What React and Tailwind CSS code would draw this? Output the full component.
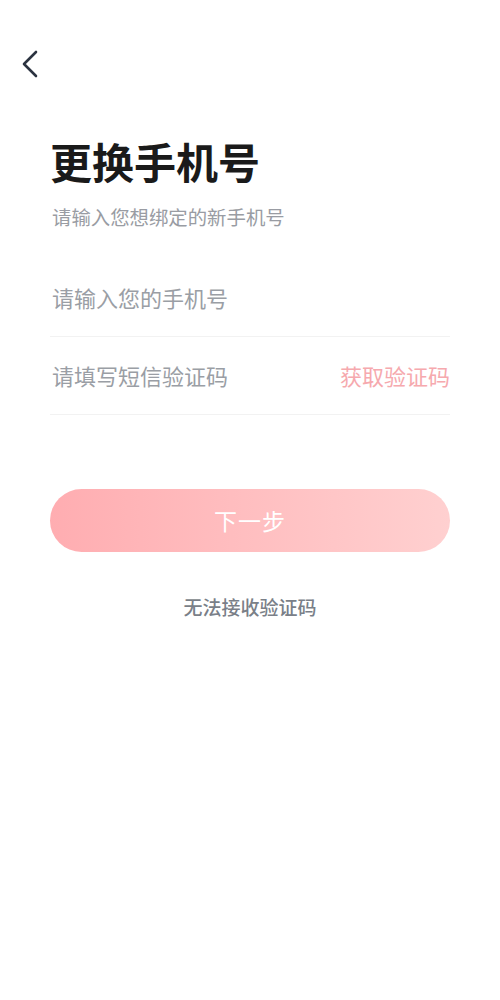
import React from "react";

const font = { fontFamily: '"Noto Sans CJK SC", "Noto Sans", sans-serif' };

const BackIcon = () => (
  <svg width="30" height="32" viewBox="0 0 30 32" fill="none">
    <polyline
      points="20,4 8,16 20,28"
      stroke="#2b3340"
      strokeWidth="2.6"
      strokeLinecap="round"
      strokeLinejoin="round"
    />
  </svg>
);

const App = () => {
  return (
    <div className="min-h-[1000px] w-full bg-white" style={font}>
      <div className="pt-[48px] pl-[16px]">
        <button className="block focus:outline-none">
          <BackIcon />
        </button>
      </div>

      <div className="px-[50px]">
        <h1 className="mt-[60px] text-[42px] leading-[42px] font-bold text-[#1a1a1a]">
          更换手机号
        </h1>
        <p className="mt-[25px] text-[19.4px] leading-[19px] text-[#999ca3] pl-[2px]">
          请输入您想绑定的新手机号
        </p>

        <div className="mt-[32px]">
          <div className="flex items-center h-[79px] border-b border-[#f2f2f2] pl-[2px]">
            <span className="text-[22px] text-[#9a9ea5]">请输入您的手机号</span>
          </div>
          <div className="flex items-center justify-between h-[78px] border-b border-[#f2f2f2] pl-[2px]">
            <span className="text-[22px] text-[#9a9ea5]">请填写短信验证码</span>
            <span className="text-[22px] text-[#f6a9ae]">获取验证码</span>
          </div>
        </div>

        <button className="mt-[74px] w-full h-[63px] rounded-full bg-gradient-to-r from-[#ffadb1] to-[#ffd0d0] text-white text-[23px] tracking-[1px] focus:outline-none">
          下一步
        </button>

        <p className="mt-[45px] text-center text-[19px] leading-[19px] font-medium text-[#7a7f88]">
          无法接收验证码
        </p>
      </div>
    </div>
  );
};

export default App;
